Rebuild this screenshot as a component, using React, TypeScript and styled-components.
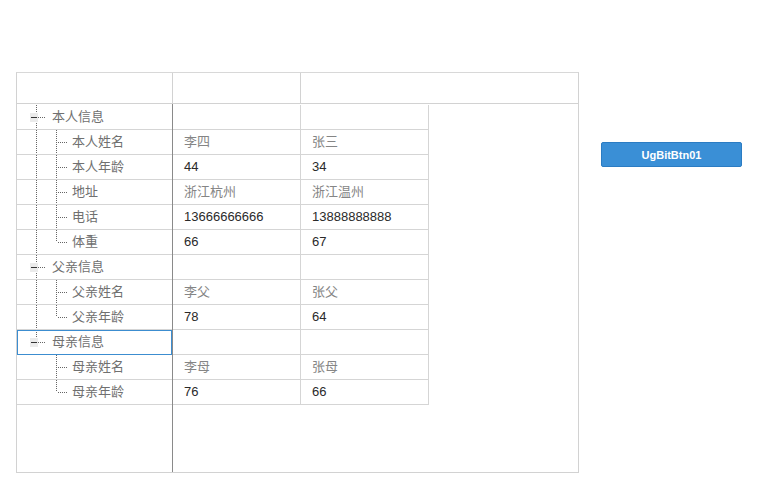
import React from 'react';
import styled, { createGlobalStyle } from 'styled-components';

type TreeRow = {
    level: 0 | 1;
    label: string;
    values: [string, string];
    lastChild?: boolean;
    underLastRoot?: boolean;
    selected?: boolean;
};

const ROWS: TreeRow[] = [
    { level: 0, label: '本人信息', values: ['', ''] },
    { level: 1, label: '本人姓名', values: ['李四', '张三'] },
    { level: 1, label: '本人年龄', values: ['44', '34'] },
    { level: 1, label: '地址', values: ['浙江杭州', '浙江温州'] },
    { level: 1, label: '电话', values: ['13666666666', '13888888888'] },
    { level: 1, label: '体重', values: ['66', '67'], lastChild: true },
    { level: 0, label: '父亲信息', values: ['', ''] },
    { level: 1, label: '父亲姓名', values: ['李父', '张父'] },
    { level: 1, label: '父亲年龄', values: ['78', '64'], lastChild: true },
    { level: 0, label: '母亲信息', values: ['', ''], selected: true, underLastRoot: true },
    { level: 1, label: '母亲姓名', values: ['李母', '张母'], underLastRoot: true },
    { level: 1, label: '母亲年龄', values: ['76', '66'], lastChild: true, underLastRoot: true },
];

const isNumeric = (v: string) => /^[0-9]+$/.test(v);

const GlobalStyle = createGlobalStyle`
    body {
        margin: 0;
        background: #ffffff;
        font-family: 'Liberation Sans', 'Noto Sans CJK SC', Arial, sans-serif;
        font-size: 13px;
    }
`;

const Page = styled.div`
    display: flex;
    align-items: flex-start;
    padding: 72px 0 0 16px;
`;

const Grid = styled.div`
    width: 561px;
    height: 399px;
    border: 1px solid #d2d2d2;
    border-top-color: #d8d8d8;
    display: flex;
    flex-direction: column;
`;

const HeaderRow = styled.div`
    display: flex;
    height: 30px;
    border-bottom: 1px solid #d2d2d2;
    flex-shrink: 0;
`;

const HeaderCell = styled.div<{ w?: number }>`
    width: ${(p) => (p.w ? `${p.w - 1}px` : 'auto')};
    flex: ${(p) => (p.w ? '0 0 auto' : '1')};
    border-right: ${(p) => (p.w ? '1px solid #d2d2d2' : 'none')};
`;

const Body = styled.div`
    display: flex;
    flex: 1;
`;

const TreeColumn = styled.div`
    width: 155px;
    padding-top: 1px;
    border-right: 1px solid #8a8a8a;
    display: flex;
    flex-direction: column;
`;

const TreeLine = styled.div<{ selected?: boolean }>`
    height: 24px;
    border-bottom: 1px solid #d5d5d5;
    display: flex;
    align-items: center;
    color: #707070;
    outline: ${(p) => (p.selected ? '1px solid #3c8dd0' : 'none')};
    outline-offset: -1px;
`;

const Guide = styled.svg`
    flex-shrink: 0;
    display: block;
`;

const Label = styled.span`
    white-space: nowrap;
    line-height: 24px;
`;

const DataArea = styled.div`
    display: flex;
    flex-direction: column;
    padding-top: 1px;
`;

const DataRow = styled.div`
    display: flex;
    height: 24px;
    border-bottom: 1px solid #d5d5d5;
`;

const DataCell = styled.div<{ muted?: boolean }>`
    width: 116px;
    padding-left: 11px;
    border-right: 1px solid #d5d5d5;
    line-height: 24px;
    color: ${(p) => (p.muted ? '#858585' : '#2a2a2a')};
    white-space: nowrap;
`;

const Button = styled.button`
    margin: 70px 0 0 22px;
    width: 141px;
    height: 25px;
    background: #3a8fd6;
    border: 1px solid #2b7cc3;
    border-radius: 2px;
    color: #ffffff;
    font-family: 'Liberation Sans', Arial, sans-serif;
    font-size: 11px;
    font-weight: bold;
    padding: 0;
`;

const TreeGuide: React.FC<{ row: TreeRow }> = ({ row }) => {
    const dot = { stroke: '#666', strokeWidth: 1, strokeDasharray: '1 1', shapeRendering: 'crispEdges' as const };
    if (row.level === 0) {
        return (
            <Guide width={35} height={24}>
                <line x1={19.5} y1={0} x2={19.5} y2={row.underLastRoot ? 12 : 24} {...dot} />
                <line x1={21} y1={12.5} x2={28} y2={12.5} {...dot} />
                <rect x={13} y={8} width={8} height={9} fill="#ebebeb" />
                <line x1={14} y1={12.5} x2={20} y2={12.5} stroke="#333" strokeWidth={1} shapeRendering="crispEdges" />
            </Guide>
        );
    }
    return (
        <Guide width={55} height={24}>
            {!row.underLastRoot && <line x1={19.5} y1={0} x2={19.5} y2={24} {...dot} />}
            <line x1={39.5} y1={0} x2={39.5} y2={row.lastChild ? 12 : 24} {...dot} />
            <line x1={41} y1={12.5} x2={50} y2={12.5} {...dot} />
        </Guide>
    );
};

const App: React.FC = () => {
    return (
        <>
            <GlobalStyle />
            <Page>
                <Grid>
                    <HeaderRow>
                        <HeaderCell w={156} />
                        <HeaderCell w={128} />
                        <HeaderCell />
                    </HeaderRow>
                    <Body>
                        <TreeColumn>
                            {ROWS.map((row) => (
                                <TreeLine key={row.label} selected={row.selected}>
                                    <TreeGuide row={row} />
                                    <Label>{row.label}</Label>
                                </TreeLine>
                            ))}
                        </TreeColumn>
                        <DataArea>
                            {ROWS.map((row) => (
                                <DataRow key={row.label}>
                                    {row.values.map((v, i) => (
                                        <DataCell key={i} muted={!isNumeric(v)}>
                                            {v}
                                        </DataCell>
                                    ))}
                                </DataRow>
                            ))}
                        </DataArea>
                    </Body>
                </Grid>
                <Button>UgBitBtn01</Button>
            </Page>
        </>
    );
};

export default App;
